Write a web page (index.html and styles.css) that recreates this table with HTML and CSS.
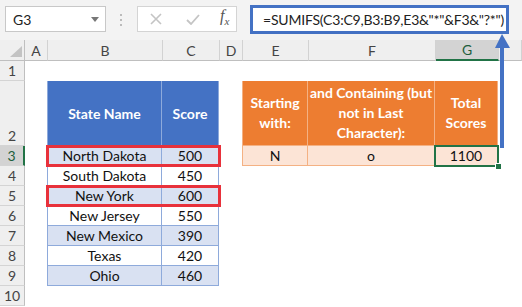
FILE: index.html
```html
<!DOCTYPE html>
<html lang="en">
<head>
  <meta charset="UTF-8">
  <title>SUMIFS starting with / containing</title>
  <link rel="stylesheet" href="styles.css">
</head>
<body>
  <!-- formula bar -->
  <div class="formula-bar">
    <div class="name-box">
      <span>G3</span>
      <svg class="caret" width="8" height="5" viewBox="0 0 8 5"><polygon points="0,0 8,0 4,5" fill="#777"/></svg>
    </div>
    <div class="grip">
      <svg width="3" height="13" viewBox="0 0 3 13">
        <rect x="0" y="0" width="2" height="2" fill="#bbb"/>
        <rect x="0" y="5" width="2" height="2" fill="#bbb"/>
        <rect x="0" y="10" width="2" height="2" fill="#bbb"/>
      </svg>
    </div>
    <div class="fx-box">
      <svg class="btn-cancel" width="12" height="12" viewBox="0 0 12 12"><path d="M1 1 L11 11 M11 1 L1 11" stroke="#c4c4c4" stroke-width="1.6" fill="none"/></svg>
      <svg class="btn-enter" width="14" height="11" viewBox="0 0 14 11"><path d="M1 6 L5 10 L13 1" stroke="#c4c4c4" stroke-width="1.8" fill="none"/></svg>
      <span class="fx">f<sub>x</sub></span>
    </div>
    <div class="formula">=SUMIFS(C3:C9,B3:B9,E3&amp;"*"&amp;F3&amp;"?*")</div>
  </div>

  <div class="sheet">
    <div class="corner">
      <svg width="12" height="11" viewBox="0 0 12 11"><polygon points="12,0 12,11 0,11" fill="#c3c3c3"/></svg>
    </div>
    <div class="colhead">A</div>
    <div class="colhead">B</div>
    <div class="colhead">C</div>
    <div class="colhead">D</div>
    <div class="colhead">E</div>
    <div class="colhead">F</div>
    <div class="colhead active">G</div>
    <div class="colhead"></div>

    <div class="rowhead">1</div>
    <div class="rowhead tall">2</div>
    <div class="rowhead active">3</div>
    <div class="rowhead">4</div>
    <div class="rowhead">5</div>
    <div class="rowhead">6</div>
    <div class="rowhead">7</div>
    <div class="rowhead">8</div>
    <div class="rowhead">9</div>
    <div class="rowhead">10</div>

    <div class="states">
      <div class="th">State Name</div><div class="th">Score</div>
      <div class="td band">North Dakota</div><div class="td band">500</div>
      <div class="td">South Dakota</div><div class="td">450</div>
      <div class="td band">New York</div><div class="td band">600</div>
      <div class="td">New Jersey</div><div class="td">550</div>
      <div class="td band">New Mexico</div><div class="td band">390</div>
      <div class="td">Texas</div><div class="td">420</div>
      <div class="td band">Ohio</div><div class="td band">460</div>
    </div>

    <div class="criteria">
      <div class="th">Starting<br>with:</div>
      <div class="th">and Containing (but<br>not in Last<br>Character):</div>
      <div class="th">Total<br>Scores</div>
      <div class="td">N</div>
      <div class="td">o</div>
      <div class="td">1100</div>
    </div>

    <div class="mark row-3"></div>
    <div class="mark row-5"></div>
    <div class="selection"></div>
  </div>

  <svg class="arrow" width="18" height="115" viewBox="0 0 18 115">
    <rect x="6" y="12" width="4" height="103" fill="#4472c4"/>
    <polygon points="8,1 1,15 16,15" fill="#4472c4"/>
  </svg>
</body>
</html>
```

FILE: styles.css
```css
body {
  margin: 0;
  width: 522px;
  height: 307px;
  overflow: hidden;
  position: relative;
  background-color: #fff;
  font-family: Lato, "Noto Sans", sans-serif;
  color: #111;
}

/* formula bar */

.formula-bar {
  display: flex;
  align-items: flex-start;
  height: 40px;
  padding-top: 6px;
  box-sizing: border-box;
  background-color: #f3f3f3;
}

.name-box {
  display: flex;
  align-items: center;
  justify-content: space-between;
  margin-left: 5px;
  width: 101px;
  height: 26px;
  padding: 0 6px 0 7px;
  box-sizing: border-box;
  border: 1px solid #c8c8c8;
  background-color: #fff;
  font-size: 14px;
  color: #222;
}

.grip {
  display: flex;
  justify-content: center;
  width: 31px;
  padding-top: 8px;
}

.fx-box {
  display: flex;
  align-items: center;
  width: 100px;
  height: 26px;
  box-sizing: border-box;
  border: 1px solid #d4d4d4;
  background-color: #fff;
}

.btn-cancel {
  margin-left: 12px;
}

.btn-enter {
  margin-left: 24px;
}

.fx {
  margin-left: 20px;
  font-family: "Liberation Serif", serif;
  font-style: italic;
  font-size: 16px;
  line-height: 16px;
  color: #555;
}

.fx sub {
  font-size: 11px;
}

.formula {
  margin-left: 13px;
  margin-top: -1px;
  width: 259px;
  height: 29px;
  padding-left: 10px;
  box-sizing: border-box;
  border: 3px solid #4472c4;
  background-color: #fff;
  font-size: 14px;
  letter-spacing: -0.2px;
  line-height: 23px;
  color: #222;
  white-space: nowrap;
}

/* sheet */

.sheet {
  display: grid;
  grid-template-columns: 25px 23px 115px 57px 23px 66px 127px 63px 1fr;
  grid-template-rows: 21px 20px 65px repeat(8, 20px);
}

.corner,
.colhead {
  display: flex;
  align-items: center;
  justify-content: center;
  background-color: #efefef;
  border-right: 1px solid #d2d2d2;
  border-bottom: 1px solid #bfbfbf;
  box-sizing: border-box;
  font-size: 14px;
  color: #444;
}

.corner {
  justify-content: flex-end;
  align-items: flex-end;
  padding: 0 2px 3px 0;
  border-right-color: #bfbfbf;
}

.colhead.active {
  background-color: #d3d3d3;
  border-bottom: 2px solid #217346;
  color: #1d5e3c;
}

.rowhead {
  grid-column: 1;
  display: flex;
  align-items: center;
  justify-content: center;
  background-color: #efefef;
  border-right: 1px solid #bfbfbf;
  border-bottom: 1px solid #d4d4d4;
  box-sizing: border-box;
  font-size: 14px;
  color: #444;
}

.rowhead.tall {
  align-items: flex-end;
  padding-bottom: 1px;
}

.rowhead.active {
  background-color: #d3d3d3;
  border-right: 2px solid #217346;
  color: #1d5e3c;
}

/* blue table */

.states {
  grid-column: 3 / 5;
  grid-row: 3 / 11;
  display: grid;
  grid-template-columns: 115px 57px;
  grid-template-rows: 65px repeat(7, 20px);
  margin-left: -1px;
}

.states .th,
.states .td {
  display: flex;
  align-items: center;
  justify-content: center;
  box-sizing: border-box;
  border-right: 1px solid #8eaadb;
  border-bottom: 1px solid #8eaadb;
  font-size: 14px;
}

.states .th:first-child,
.states .td:nth-child(odd) {
  border-left: 1px solid #8eaadb;
}

.states .th {
  background-color: #4472c4;
  color: #fff;
  font-weight: bold;
}

.states .band {
  background-color: #d9e1f2;
}

/* orange table */

.criteria {
  grid-column: 6 / 9;
  grid-row: 3 / 5;
  display: grid;
  grid-template-columns: 66px 127px 63px;
  grid-template-rows: 65px 20px;
  margin-left: -1px;
}

.criteria .th,
.criteria .td {
  display: flex;
  align-items: center;
  justify-content: center;
  text-align: center;
  box-sizing: border-box;
  border-right: 1px solid #f4b183;
  border-bottom: 1px solid #f4b183;
  font-size: 14px;
  white-space: nowrap;
}

.criteria .th:first-child,
.criteria .td:nth-child(4) {
  border-left: 1px solid #f4b183;
}

.criteria .th {
  background-color: #ed7d31;
  color: #fff;
  font-weight: bold;
  line-height: 20px;
}

.criteria .td {
  background-color: #fce4d6;
}

/* highlights */

.mark {
  grid-column: 3 / 5;
  margin: -1px -1px -1px -2px;
  border: 3px solid #e8313b;
  z-index: 2;
}

.mark.row-3 {
  grid-row: 4;
}

.mark.row-5 {
  grid-row: 6;
}

.selection {
  grid-column: 8;
  grid-row: 4;
  position: relative;
  margin: -1px 0 -1px -2px;
  border: 2px solid #217346;
  z-index: 2;
}

.selection::after {
  content: "";
  position: absolute;
  right: -5px;
  bottom: -5px;
  width: 5px;
  height: 5px;
  background-color: #217346;
  border: 1px solid #fff;
}

.arrow {
  position: absolute;
  left: 494px;
  top: 33px;
  z-index: 3;
}
```
